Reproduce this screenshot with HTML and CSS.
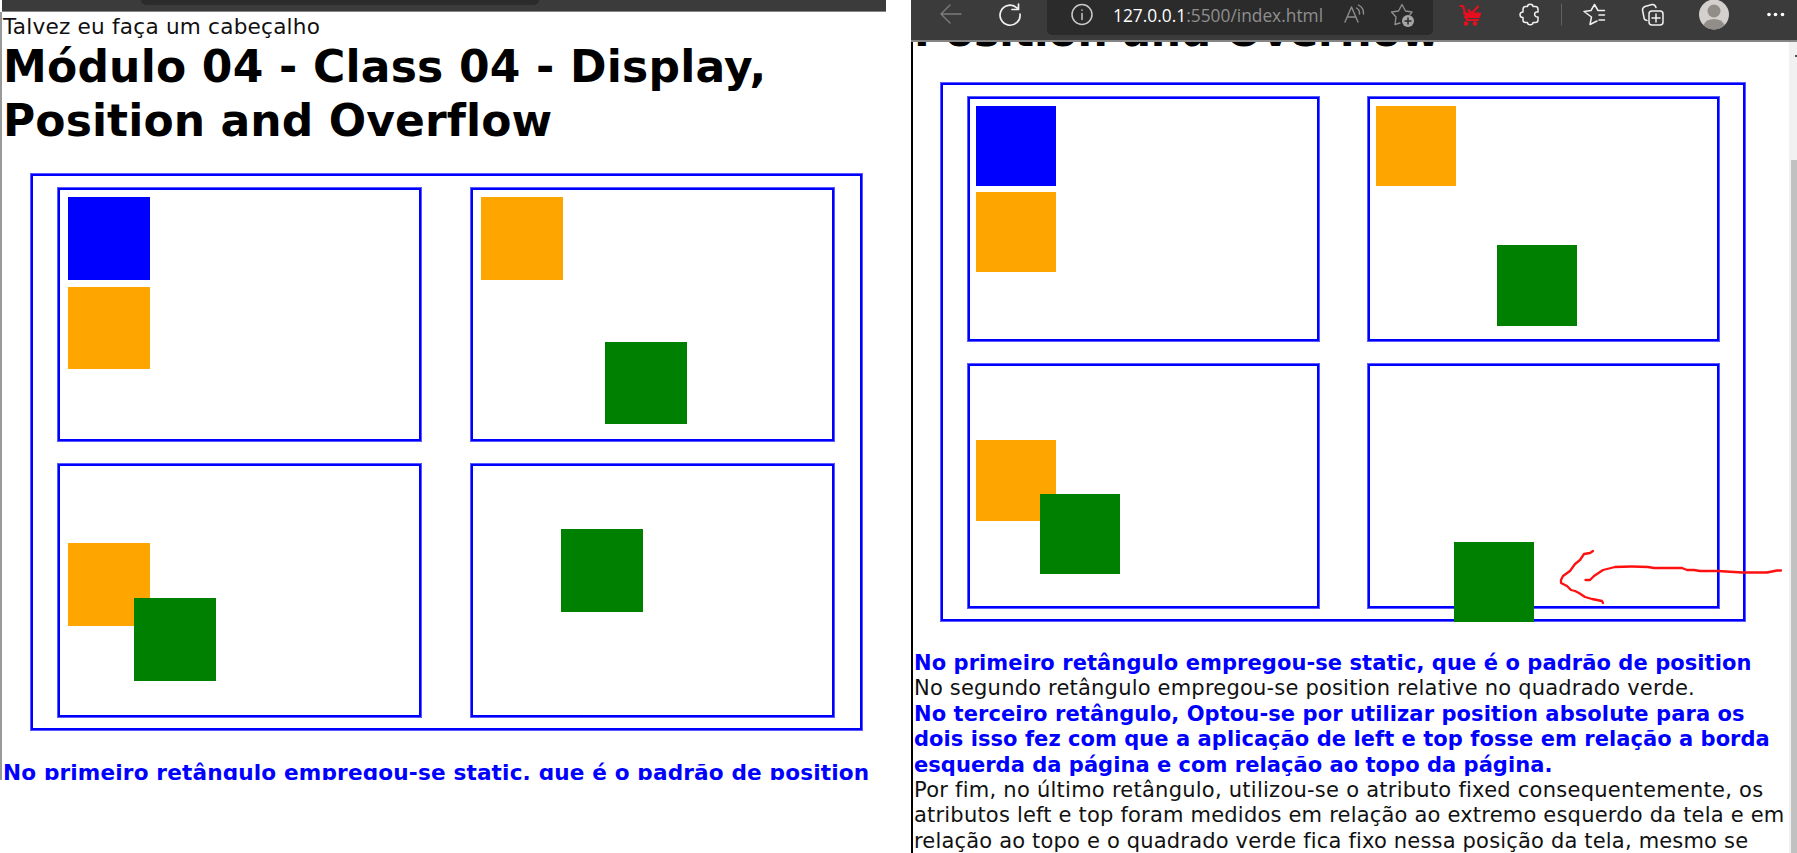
FILE: index.html
```html
<!DOCTYPE html>
<html lang="pt-BR">
<head>
<meta charset="utf-8">
<title>Display, Position and Overflow</title>
<link rel="stylesheet" href="styles.css">
</head>
<body>
<main class="compare">
  <section class="shot shot-left">
    <div class="chrome chrome-left"><div class="pill"></div></div>
    <div class="page">
      <p class="line note"><span class="t1">Talvez eu faça um cabeçalho</span></p>
      <h1 class="title"><span class="t2">Módulo 04 - Class 04 - Display,</span><br><span class="t3">Position and Overflow</span></h1>
      <div class="grid">
        <div class="panel"><i class="sq blue"></i><i class="sq orange"></i></div>
        <div class="panel"><i class="sq orange"></i><i class="sq green rel"></i></div>
        <div class="panel"><i class="sq orange abs"></i><i class="sq green abs2"></i></div>
        <div class="panel"><i class="sq green fixed"></i></div>
      </div>
      <p class="line strong"><span class="t4">No primeiro retângulo empregou-se static, que é o padrão de position</span></p>
    </div>
  </section>
  <section class="shot shot-right">
    <div class="chrome chrome-right">
      <div class="address"><span class="host">127.0.0.1</span><span class="path">:5500/index.html</span></div>
      <svg class="icons" width="886" height="40" viewBox="911 0 886 40" fill="none" stroke-linecap="round" stroke-linejoin="round">
        <g stroke="#7c7c7c" stroke-width="1.4"><path d="M961 14H941M950 5L941 14L950 23"/></g>
        <path d="M1017 8A10 10 0 1 0 1020 14M1018.500 4V9.500H1012" stroke="#f0f0f0" stroke-width="1.700"/>
        <g stroke="#c8c8c8" stroke-width="1.500"><circle cx="1082" cy="14.500" r="10"/><path d="M1082 13.500V19.500M1082 10V10.200"/></g>
        <g stroke="#8d8d8d" stroke-width="1.400"><path d="M1345 22L1351.500 7L1358 22M1347.500 17H1355.500M1356.500 8Q1360 10 1359.500 14M1358.500 5Q1364 8 1363.500 14"/>
        <path d="M1400 23L1395 24.500L1396 17L1391.500 12L1398.500 11L1402 4.500L1405.500 11L1412 12L1410 14.500"/></g>
        <circle cx="1408" cy="21" r="6" fill="#a5a5a5"/><path d="M1408 18V24M1405 21H1411" stroke="#2b2b2b" stroke-width="1.500"/>
        <g stroke="#e60f20" stroke-width="2.200"><path d="M1460.500 6H1463L1467 20H1478M1464 13.500L1480 13.500M1465 17H1479L1480 13.500M1468.500 10L1471.500 13.500L1478 6.500"/></g>
        <path d="M1464 13H1480.500L1479 18H1466Z" fill="#e60f20"/>
        <circle cx="1466" cy="23.500" r="2.300" fill="#e60f20"/><circle cx="1475" cy="23.500" r="2.300" fill="#e60f20"/>
        <path d="M1525.500 6.500H1527.500C1527.500 3.500 1533 3.500 1533 6.500H1535.500Q1538 6.500 1538 9.500V12C1533.500 11 1533.500 17.500 1538 17V20Q1538 22.500 1535.500 22.500H1533C1533 25.500 1527.500 25.500 1527.500 22.500H1525.500Q1523 22.500 1523 20V17.500C1519 17.500 1519 12 1523 12V9.500Q1523 6.500 1525.500 6.500Z" stroke="#f0f0f0" stroke-width="1.500"/>
        <path d="M1561.500 4V25" stroke="#626262" stroke-width="1"/>
        <path d="M1597 21L1590 24.500L1591.500 17L1584 11.500L1591 10.500L1594.500 4.500L1598 10.500H1604.500M1599 15H1604.500M1599 20H1604.500" stroke="#f0f0f0" stroke-width="1.500"/>
        <g stroke="#f0f0f0" stroke-width="1.500"><rect x="1649" y="11" width="14" height="14" rx="3"/><path d="M1656 14V22M1652 18H1660M1647 20.500Q1644 20 1644 17.500L1642.500 10Q1642.500 7.500 1645 6.500L1652 4.500Q1655 4 1656 7.500"/></g>
        <circle cx="1714" cy="14.500" r="15" fill="#d3d0cd"/><circle cx="1714" cy="11" r="6.500" fill="#918d89"/><path d="M1703.500 25Q1706 19 1714 19T1724.500 25Q1720 29.500 1714 29.500T1703.500 25Z" fill="#918d89"/>
        <g fill="#fff"><circle cx="1769" cy="14.500" r="1.800"/><circle cx="1775.500" cy="14.500" r="1.800"/><circle cx="1782.500" cy="14.500" r="1.800"/></g>
      </svg>
    </div>
    <div class="page page-right">
      <h1 class="title scrolled"><span class="t5">Position and Overflow</span></h1>
      <div class="grid">
        <div class="panel"><i class="sq blue"></i><i class="sq orange"></i></div>
        <div class="panel"><i class="sq orange"></i><i class="sq green rel"></i></div>
        <div class="panel"><i class="sq orange abs"></i><i class="sq green abs2"></i></div>
        <div class="panel"><i class="sq green fixed"></i></div>
      </div>
      <div class="copy">
        <p class="line strong"><span class="r1">No primeiro retângulo empregou-se static, que é o padrão de position</span></p>
        <p class="line"><span class="r2">No segundo retângulo empregou-se position relative no quadrado verde.</span></p>
        <p class="line strong"><span class="r3">No terceiro retângulo, Optou-se por utilizar position absolute para os</span></p>
        <p class="line strong"><span class="r4">dois isso fez com que a aplicação de left e top fosse em relação a borda</span></p>
        <p class="line strong"><span class="r5">esquerda da página e com relação ao topo da página.</span></p>
        <p class="line"><span class="r6">Por fim, no último retângulo, utilizou-se o atributo fixed consequentemente, os</span></p>
        <p class="line"><span class="r7">atributos left e top foram medidos em relação ao extremo esquerdo da tela e em</span></p>
        <p class="line"><span class="r8">relação ao topo e o quadrado verde fica fixo nessa posição da tela, mesmo se</span></p>
      </div>
      <div class="scrollbar"><div class="up"></div><div class="thumb"></div></div>
    </div>
    <svg class="arrow" width="230" height="60" viewBox="1555 545 230 60" fill="none" stroke="#ff1010" stroke-width="2.300" stroke-linecap="round" stroke-linejoin="round">
      <path d="M1593 551L1590 553L1584 554L1580 560L1575 564L1570 571L1563 576L1561 580V583L1567 586L1571 590L1575 591L1579 593L1585 597L1592 599L1602 601L1603 603"/>
      <path d="M1585.500 580H1590L1594 576L1603 570L1615 567Q1632 566 1648 567L1654 568H1682L1687 570H1694L1700 571H1718L1742 572.500H1767L1777 570.500H1781"/>
    </svg>
  </section>
</main>
</body>
</html>
```
FILE: styles.css
```css
* { box-sizing: border-box; }
body { margin: 0; background: #fff; overflow: hidden; }
p, h1 { margin: 0; }
.compare { display: flex; justify-content: space-between; width: 1797px; height: 853px; }
.shot {
  position: relative;
  overflow: hidden;
  font-family: "DejaVu Sans", Verdana, sans-serif;
  font-variant-ligatures: none;
  color: #111;
}
.shot-left {
  --sq: 82.6px;
  width: 886px;
  height: 780px;
  font-size: 21.6px;
}
.shot-right {
  --sq: 80.3px;
  width: 886px;
  height: 853px;
  font-size: 21px;
}
.chrome { background: #3b3b3b; border-bottom: 1px solid #858585; }
.chrome-left { height: 12px; margin-left: 2px; padding-left: 139px; }
.pill { width: 398px; height: 5px; background: #2b2b2b; border-radius: 0 0 5px 5px; }
.chrome-right { position: relative; height: 42px; padding-left: 136px; border-bottom-width: 2px; }
.address {
  width: 386px;
  height: 35px;
  padding: 4px 0 0 66px;
  background: #2b2b2b;
  border-radius: 0 0 5px 5px;
  font: 17.35px/22px "Open Sans", "Noto Sans", sans-serif;
  white-space: nowrap;
}
.host { color: #fff; }
.path { color: #8f8f8f; }
.icons { position: absolute; left: 0; top: 0; }
.page { border-left: 2px solid #999; height: 768px; padding: 2px 0 0 1px; }
.page-right { position: relative; border-left-color: #000; height: 811px; padding-top: 0; overflow: hidden; }
.line { white-space: nowrap; line-height: 26px; height: 26px; }
.strong { color: #00f; font-weight: bold; }
.title { font-size: 44px; line-height: 54px; color: #000; white-space: nowrap; }
.shot-left .title { height: 108px; }
.shot-right .scrolled { font-size: 42.5px; height: 77px; line-height: 52px; margin-top: -36px; }
.t1 { letter-spacing: .21px; }
.t2 { letter-spacing: .2px; }
.t3 { letter-spacing: .09px; }
.t4 { letter-spacing: .154px; }
.t5 { letter-spacing: -.13px; }
.r1 { letter-spacing: .077px; }
.r2 { letter-spacing: .2px; }
.r3 { letter-spacing: .09px; }
.r4 { letter-spacing: .05px; }
.r5 { letter-spacing: .04px; }
.r6 { letter-spacing: .25px; }
.r7 { letter-spacing: .2px; }
.r8 { letter-spacing: .18px; }
.grid {
  display: grid;
  border: 2px solid #00f;
  box-shadow: 0 0 0 1px rgba(0, 0, 255, .65);
}
.panel {
  position: relative;
  border: 2px solid #00f;
  box-shadow: 0 0 0 1px rgba(0, 0, 255, .65);
}
.shot-left .grid {
  width: 831px; height: 556px;
  margin: 26px 0 30px 28px;
  padding: 12px 0 0 25px;
  grid-template-columns: 363px 363px;
  grid-template-rows: 253px 253px;
  gap: 23px 50px;
}
.shot-left .panel { padding: 7px 0 0 7.6px; }
.shot-right .grid {
  width: 804px; height: 538px;
  margin: 0 0 30px 27px;
  padding: 12px 0 0 25px;
  grid-template-columns: 351px 351px;
  grid-template-rows: 244px 244px;
  gap: 23px 49px;
}
.shot-right .panel { padding: 6.6px 0 0 6px; }
.sq { display: block; width: var(--sq); height: var(--sq); margin-bottom: 7px; }
.shot-right .sq { margin-bottom: 6.3px; }
.blue { background: #00f; }
.orange { background: orange; }
.green { background: green; }
.rel, .abs, .abs2, .fixed { position: absolute; z-index: 1; }
.shot-left .rel { left: 131.5px; top: 151.5px; }
.shot-left .abs { left: 7.6px; top: 77px; }
.shot-left .abs2 { left: 73.7px; top: 132px; }
.shot-left .fixed { left: 87.5px; top: 63px; }
.shot-right .rel { left: 126.6px; top: 146.4px; }
.shot-right .abs { left: 6px; top: 74.4px; }
.shot-right .abs2 { left: 70px; top: 128px; }
.shot-right .fixed { left: 83.6px; top: 176px; }
.copy .line { height: 25.4px; line-height: 25.4px; }
.scrollbar { position: absolute; right: 0; top: 0; width: 8px; height: 811px; padding: 13px 0 0 2px; background: #f1f1f1; }
.up { width: 2px; height: 2px; margin: 0 0 103px auto; background: #505050; }
.thumb { height: 693px; background: #c1c1c1; }
.arrow { position: absolute; left: 644px; top: 545px; }
```
